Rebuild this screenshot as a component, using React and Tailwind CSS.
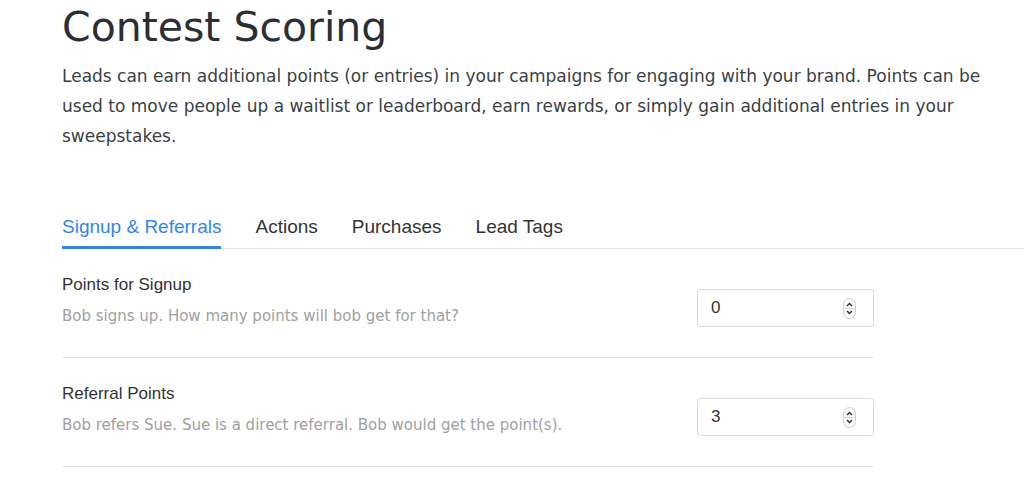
import React from "react";

function Spinner() {
  return (
    <svg width="13" height="21" viewBox="0 0 13 21" className="block">
      <rect x="0.5" y="0.5" width="12" height="20" rx="6" fill="#fafafa" stroke="#cfcfcf" />
      <line x1="1" y1="10.5" x2="12" y2="10.5" stroke="#d8d8d8" />
      <path d="M4 8 L6.5 5.5 L9 8" fill="none" stroke="#333" strokeWidth="1.4" />
      <path d="M4 13 L6.5 15.5 L9 13" fill="none" stroke="#333" strokeWidth="1.4" />
    </svg>
  );
}

function Row({ title, desc, value }) {
  return (
    <div className="w-[812px] border-b border-[#e6e6e6] flex items-start justify-between pt-[26px] pb-[30px]">
      <div className="flex flex-col">
        <div className="text-[17px] text-[#333] leading-[20px] font-['Liberation_Sans',Arial,sans-serif]">{title}</div>
        <div className="mt-[11px] text-[15px] text-[#a0a0a0] leading-[20px] font-['DejaVu_Sans',Verdana,sans-serif]">{desc}</div>
      </div>
      <div className="mt-[14px] w-[177px] h-[38px] border border-[#dcdcdc] rounded-[3px] flex items-center justify-between pl-[13px] pr-[17px]">
        <span className="text-[17px] text-[#333] font-['Liberation_Sans',Arial,sans-serif]">{value}</span>
        <Spinner />
      </div>
    </div>
  );
}

export default function App() {
  return (
    <div className="w-[1024px] h-[499px] bg-white overflow-hidden">
      <div className="pl-[62px]">
        <h1 className="text-[41px] leading-[50px] text-[#2b2f33] font-['DejaVu_Sans',Verdana,sans-serif] pt-[2px]">
          Contest Scoring
        </h1>
        <p className="mt-[9px] w-[960px] text-[17px] leading-[30px] text-[#3a3f44] font-['DejaVu_Sans',Verdana,sans-serif]">
          Leads can earn additional points (or entries) in your campaigns for engaging with your brand. Points can be used to move people up a waitlist or leaderboard, earn rewards, or simply gain additional entries in your sweepstakes.
        </p>
        <div className="mt-[65px] border-b border-[#e3e3e3] flex gap-[34px] text-[19px] leading-[22px] font-['Liberation_Sans',Arial,sans-serif]">
          <div className="pb-[8px] border-b-[3px] border-[#2f86f0] text-[#2f86f0] -mb-[1px]">Signup &amp; Referrals</div>
          <div className="pb-[8px] text-[#333]">Actions</div>
          <div className="pb-[8px] text-[#333]">Purchases</div>
          <div className="pb-[8px] text-[#333]">Lead Tags</div>
        </div>
        <Row title="Points for Signup" desc="Bob signs up. How many points will bob get for that?" value="0" />
        <Row title="Referral Points" desc="Bob refers Sue. Sue is a direct referral. Bob would get the point(s)." value="3" />
      </div>
    </div>
  );
}
